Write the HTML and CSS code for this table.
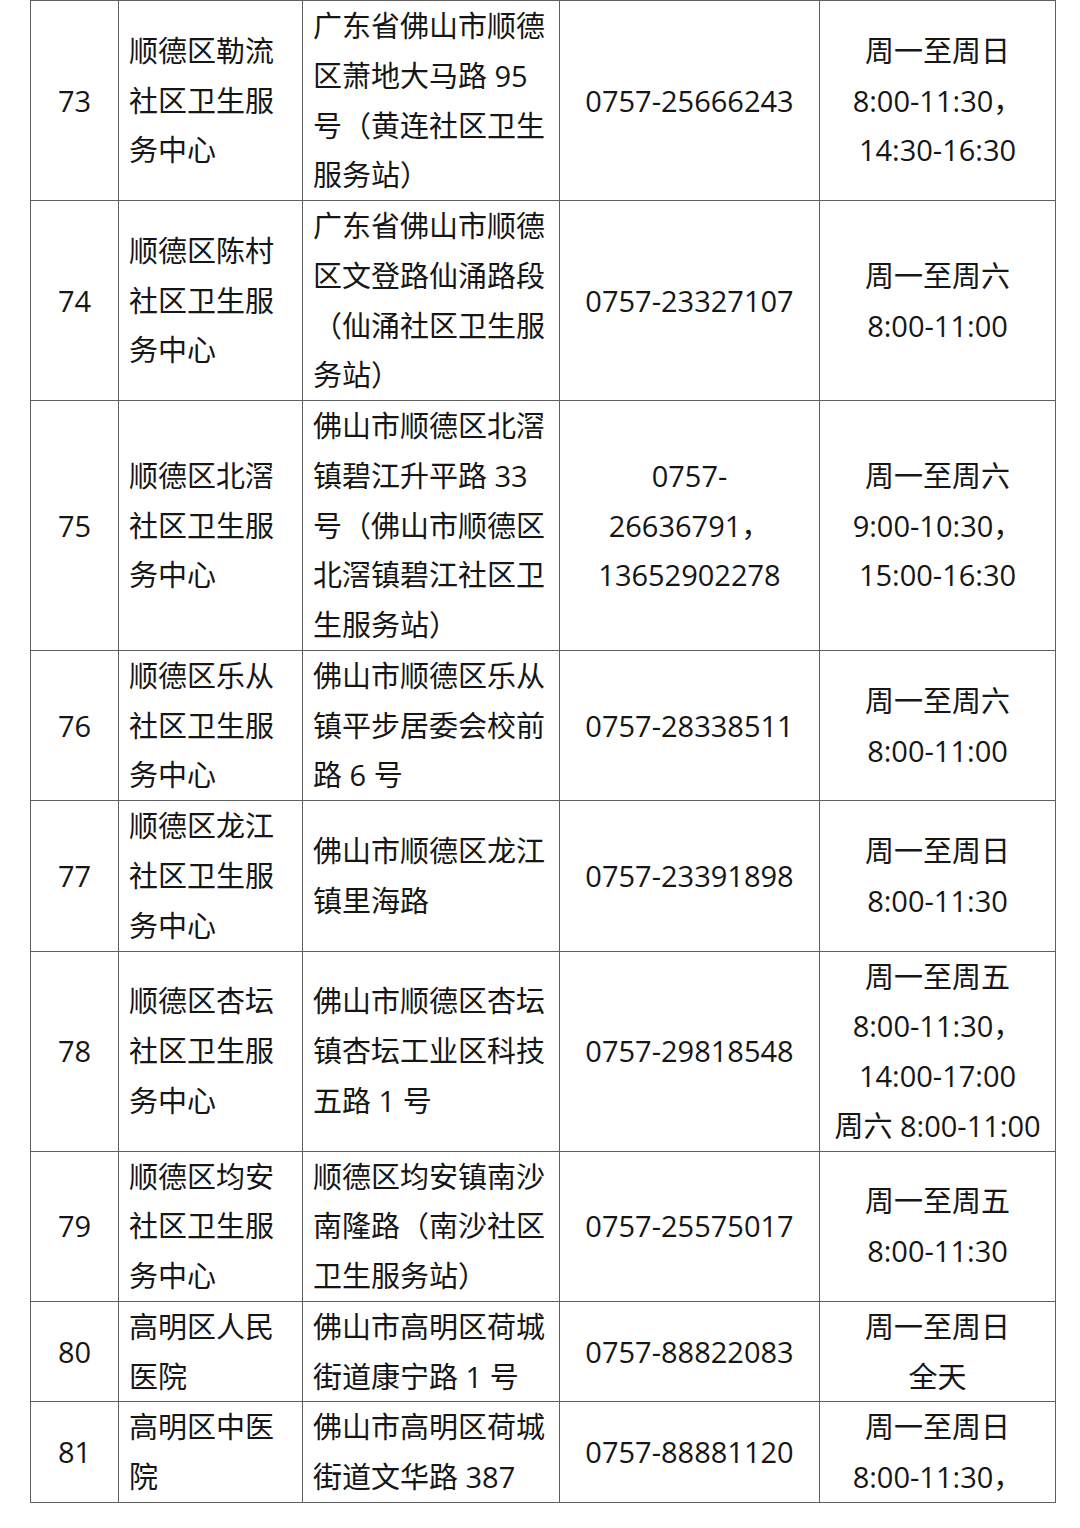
FILE: index.html
```html
<!DOCTYPE html>
<html lang="zh-CN">
<head>
<meta charset="utf-8">
<title>社区卫生服务中心</title>
<link rel="stylesheet" href="styles.css">
</head>
<body>
<table class="list">
  <colgroup>
    <col class="c-no">
    <col class="c-name">
    <col class="c-addr">
    <col class="c-tel">
    <col class="c-time">
  </colgroup>
  <tbody>
    <tr>
      <td class="no">73</td>
      <td class="name">顺德区勒流<br>社区卫生服<br>务中心</td>
      <td class="addr">广东省佛山市顺德<br>区萧地大马路 95<br>号（黄连社区卫生<br>服务站）</td>
      <td class="tel">0757-25666243</td>
      <td class="time">周一至周日<br>8:00-11:30，<br>14:30-16:30</td>
    </tr>
    <tr>
      <td class="no">74</td>
      <td class="name">顺德区陈村<br>社区卫生服<br>务中心</td>
      <td class="addr">广东省佛山市顺德<br>区文登路仙涌路段<br>（仙涌社区卫生服<br>务站）</td>
      <td class="tel">0757-23327107</td>
      <td class="time">周一至周六<br>8:00-11:00</td>
    </tr>
    <tr>
      <td class="no">75</td>
      <td class="name">顺德区北滘<br>社区卫生服<br>务中心</td>
      <td class="addr">佛山市顺德区北滘<br>镇碧江升平路 33<br>号（佛山市顺德区<br>北滘镇碧江社区卫<br>生服务站）</td>
      <td class="tel">0757-<br>26636791，<br>13652902278</td>
      <td class="time">周一至周六<br>9:00-10:30，<br>15:00-16:30</td>
    </tr>
    <tr>
      <td class="no">76</td>
      <td class="name">顺德区乐从<br>社区卫生服<br>务中心</td>
      <td class="addr">佛山市顺德区乐从<br>镇平步居委会校前<br>路 6 号</td>
      <td class="tel">0757-28338511</td>
      <td class="time">周一至周六<br>8:00-11:00</td>
    </tr>
    <tr>
      <td class="no">77</td>
      <td class="name">顺德区龙江<br>社区卫生服<br>务中心</td>
      <td class="addr">佛山市顺德区龙江<br>镇里海路</td>
      <td class="tel">0757-23391898</td>
      <td class="time">周一至周日<br>8:00-11:30</td>
    </tr>
    <tr>
      <td class="no">78</td>
      <td class="name">顺德区杏坛<br>社区卫生服<br>务中心</td>
      <td class="addr">佛山市顺德区杏坛<br>镇杏坛工业区科技<br>五路 1 号</td>
      <td class="tel">0757-29818548</td>
      <td class="time">周一至周五<br>8:00-11:30，<br>14:00-17:00<br>周六 8:00-11:00</td>
    </tr>
    <tr>
      <td class="no">79</td>
      <td class="name">顺德区均安<br>社区卫生服<br>务中心</td>
      <td class="addr">顺德区均安镇南沙<br>南隆路（南沙社区<br>卫生服务站）</td>
      <td class="tel">0757-25575017</td>
      <td class="time">周一至周五<br>8:00-11:30</td>
    </tr>
    <tr>
      <td class="no">80</td>
      <td class="name">高明区人民<br>医院</td>
      <td class="addr">佛山市高明区荷城<br>街道康宁路 1 号</td>
      <td class="tel">0757-88822083</td>
      <td class="time">周一至周日<br>全天</td>
    </tr>
    <tr>
      <td class="no">81</td>
      <td class="name">高明区中医<br>院</td>
      <td class="addr">佛山市高明区荷城<br>街道文华路 387</td>
      <td class="tel">0757-88881120</td>
      <td class="time">周一至周日<br>8:00-11:30，</td>
    </tr>
  </tbody>
</table>
</body>
</html>
```

FILE: styles.css
```css
html, body {
  margin: 0;
  padding: 0;
  background: #ffffff;
}

body {
  font-family: "Open Sans", "Noto Sans CJK SC", sans-serif;
  font-size: 29px;
  color: #161616;
}

.list {
  margin-left: 30px;
  width: 1025px;
  border-collapse: collapse;
  table-layout: fixed;
}

.c-no { width: 88px; }
.c-name { width: 184px; }
.c-addr { width: 257px; }
.c-tel { width: 260px; }
.c-time { width: 236px; }

.list td {
  border: 1px solid #5e5e5e;
  padding: 0 10px;
  line-height: 49.77px;
  vertical-align: middle;
  white-space: nowrap;
}

.list td.no,
.list td.tel,
.list td.time {
  text-align: center;
  padding: 0 2px;
}

.list td.name,
.list td.addr {
  text-align: left;
}
```
